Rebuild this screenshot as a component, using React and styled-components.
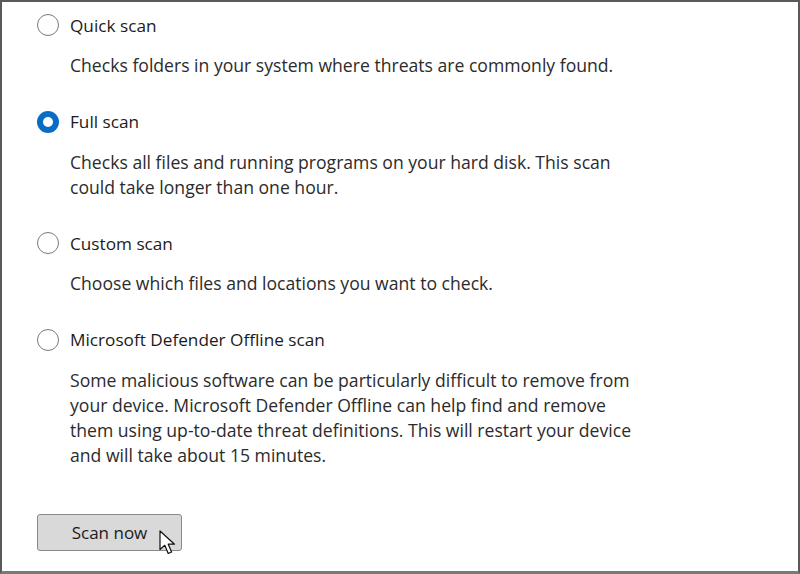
import React from "react";
import styled, { createGlobalStyle } from "styled-components";

const Global = createGlobalStyle`
  html, body { margin: 0; padding: 0; background: #ffffff; }
  body { font-family: "Open Sans", "Noto Sans", sans-serif; }
`;

const Frame = styled.div`
  box-sizing: border-box;
  width: 800px;
  height: 574px;
  border-top: 2px solid #5a5a5a;
  border-left: 2px solid #5a5a5a;
  border-right: 2px solid #5a5a5a;
  border-bottom: 3px solid #7a7a7a;
  background: #ffffff;
  padding: 9px 0 0 35px;
  display: flex;
  flex-direction: column;
  color: #1b1b1b;
`;

const Option = styled.div`
  display: flex;
  flex-direction: column;
  & + & { margin-top: 29.5px; }
`;

const Row = styled.label`
  display: flex;
  align-items: center;
  gap: 11px;
  height: 28px;
  font-size: 17.2px;
`;

const Radio = styled.span`
  box-sizing: border-box;
  width: 22px;
  height: 22px;
  border-radius: 50%;
  flex: none;
  display: flex;
  align-items: center;
  justify-content: center;
  border: ${(p) => (p.$checked ? "none" : "1.5px solid #7a7a7a")};
  background: ${(p) => (p.$checked ? "#0a6cc4" : "#ffffff")};
  &::after {
    content: "";
    display: ${(p) => (p.$checked ? "block" : "none")};
    width: 10px;
    height: 10px;
    border-radius: 50%;
    background: #ffffff;
  }
`;

const Desc = styled.p`
  margin: 14px 0 0 33px;
  font-size: 17.6px;
  line-height: 25px;
  color: #2b2b2b;
  white-space: nowrap;
`;

const ButtonWrap = styled.div`
  position: relative;
  margin-top: 46.5px;
  align-self: flex-start;
`;

const Button = styled.button`
  box-sizing: border-box;
  width: 145px;
  height: 37px;
  border: 1px solid #8a8a8a;
  border-radius: 3px;
  background: #d9d9d9;
  font-family: "Open Sans", "Noto Sans", sans-serif;
  font-size: 17px;
  color: #1b1b1b;
  padding: 0;
  cursor: default;
`;

const Cursor = styled.svg`
  position: absolute;
  left: 122px;
  top: 16px;
  pointer-events: none;
`;

const options = [
  {
    label: "Quick scan",
    desc: ["Checks folders in your system where threats are commonly found."],
  },
  {
    label: "Full scan",
    checked: true,
    desc: [
      "Checks all files and running programs on your hard disk. This scan",
      "could take longer than one hour.",
    ],
  },
  {
    label: "Custom scan",
    desc: ["Choose which files and locations you want to check."],
  },
  {
    label: "Microsoft Defender Offline scan",
    desc: [
      "Some malicious software can be particularly difficult to remove from",
      "your device. Microsoft Defender Offline can help find and remove",
      "them using up-to-date threat definitions. This will restart your device",
      "and will take about 15 minutes.",
    ],
  },
];

export default function App() {
  return (
    <>
      <Global />
      <Frame>
        {options.map((o) => (
          <Option key={o.label}>
            <Row>
              <Radio $checked={o.checked} />
              {o.label}
            </Row>
            <Desc>
              {o.desc.map((l, i) => (
                <React.Fragment key={i}>
                  {l}
                  {i < o.desc.length - 1 && <br />}
                </React.Fragment>
              ))}
            </Desc>
          </Option>
        ))}
        <ButtonWrap>
          <Button>Scan now</Button>
          <Cursor width="20" height="26" viewBox="0 0 20 26">
            <path
              d="M1 1 L1 19.5 L5.8 15.3 L9.2 23.5 L12.6 22 L9.2 14.2 L15.5 14.2 Z"
              fill="#ffffff"
              stroke="#111111"
              strokeWidth="1.2"
              strokeLinejoin="round"
            />
          </Cursor>
        </ButtonWrap>
      </Frame>
    </>
  );
}
